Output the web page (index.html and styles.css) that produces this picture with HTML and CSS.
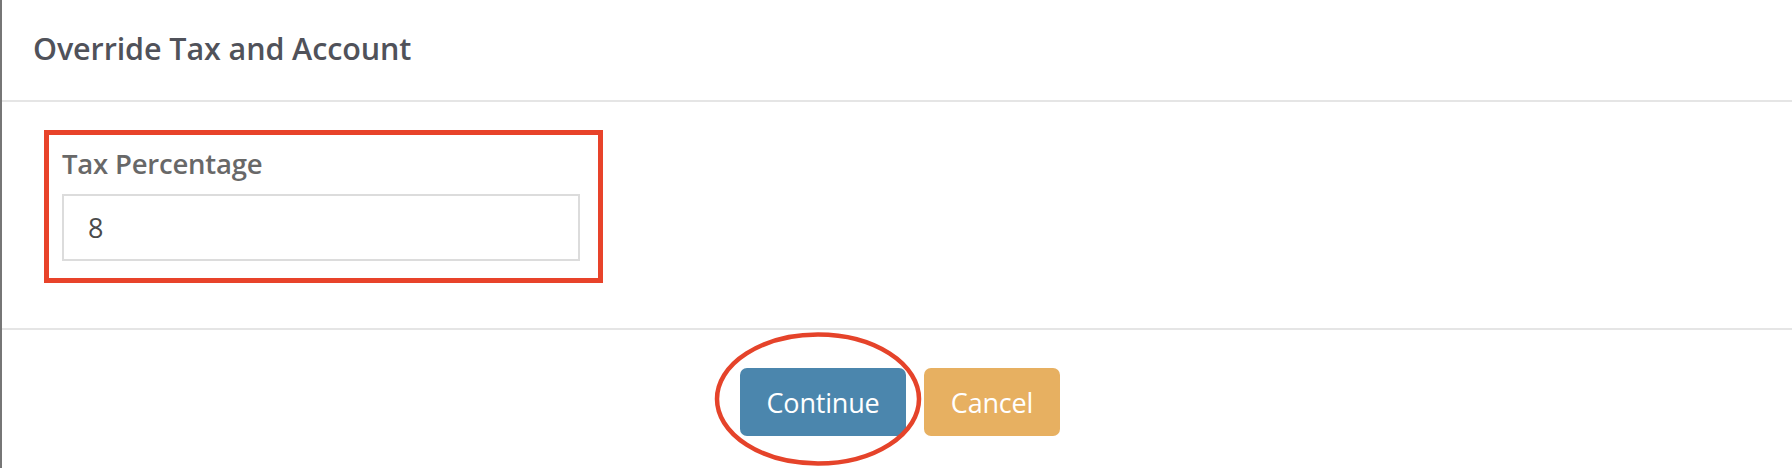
FILE: index.html
```html
<!DOCTYPE html>
<html lang="en">
<head>
<meta charset="utf-8">
<title>Override Tax and Account</title>
<link rel="stylesheet" href="styles.css">
</head>
<body>
<div class="modal">
  <div class="modal-header">
    <h4 class="modal-title">Override Tax and Account</h4>
  </div>
  <div class="modal-body">
    <div class="form-group highlight-box">
      <label class="field-label" for="tax">Tax Percentage</label>
      <input class="field-input" id="tax" type="text" value="8">
    </div>
  </div>
  <div class="modal-footer">
    <button class="btn btn-primary" type="button">Continue</button>
    <button class="btn btn-warning" type="button">Cancel</button>
    <svg class="annotation-ellipse" width="212" height="138" viewBox="0 0 212 138" aria-hidden="true">
      <ellipse cx="106" cy="69" rx="101" ry="64.5" fill="none" stroke="#e5432a" stroke-width="4.5"/>
    </svg>
  </div>
</div>
</body>
</html>
```

FILE: styles.css
```css
* { box-sizing: border-box; }

html, body {
  margin: 0;
  padding: 0;
  background: #ffffff;
}

body {
  font-family: "Open Sans", "Noto Sans", "Liberation Sans", sans-serif;
  width: 1792px;
  height: 468px;
  overflow: hidden;
}

.modal {
  position: relative;
  height: 468px;
  border-left: 2px solid #767676;
  display: flex;
  flex-direction: column;
}

.modal-header {
  height: 102px;
  padding: 0 0 0 31px;
  border-bottom: 2px solid #e5e5e5;
  display: flex;
  align-items: center;
}

.modal-title {
  margin: 0 0 4px 0;
  font-size: 30.5px;
  font-weight: 600;
  color: #50525a;
  letter-spacing: -0.1px;
}

.modal-body {
  height: 228px;
  padding: 28px 0 0 42px;
  border-bottom: 2px solid #e5e5e5;
}

.highlight-box {
  width: 559px;
  height: 153px;
  border: 5px solid #e8432a;
  padding: 10px 18px 0 13px;
  display: flex;
  flex-direction: column;
}

.field-label {
  font-size: 27.5px;
  font-weight: 600;
  color: #686868;
  line-height: 38px;
  margin-bottom: 11px;
  letter-spacing: -0.2px;
}

.field-input {
  width: 518px;
  height: 67px;
  border: 2px solid #dcdcdc;
  border-radius: 0;
  padding: 0 0 0 24px;
  font-family: "Open Sans", "Noto Sans", "Liberation Sans", sans-serif;
  font-size: 27px;
  color: #4a4a4a;
  outline: none;
  background: #ffffff;
}

.modal-footer {
  flex: 1;
  display: flex;
  justify-content: center;
  align-items: flex-start;
  gap: 18px;
  padding-top: 38px;
  padding-left: 6px;
}

.btn {
  height: 68px;
  border: none;
  border-radius: 7px;
  font-family: "Open Sans", "Noto Sans", "Liberation Sans", sans-serif;
  font-size: 27px;
  color: #ffffff;
  cursor: pointer;
  letter-spacing: -0.2px;
}

.btn-primary {
  width: 166px;
  background: #4b86ad;
}

.btn-warning {
  width: 136px;
  background: #e7b061;
}

.annotation-ellipse {
  position: absolute;
  left: 710px;
  top: 330px;
}
```
